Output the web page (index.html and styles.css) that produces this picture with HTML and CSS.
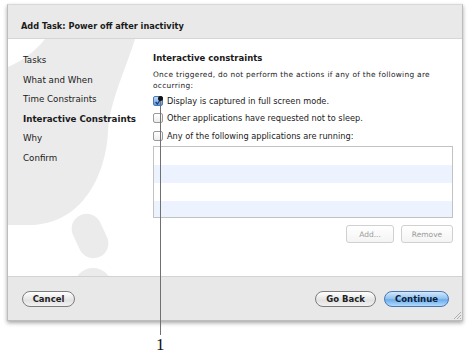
FILE: index.html
```html
<!DOCTYPE html>
<html lang="en">

<head>
    <meta charset="UTF-8">
    <title>Add Task</title>
    <link rel="stylesheet" href="styles.css">
</head>

<body>
    <div class="window">
        <div class="title-bar">Add Task: Power off after inactivity</div>

        <div class="content">
            <!-- faint artwork behind the sidebar -->
            <svg class="watermark" width="150" height="238" viewBox="8 38 150 238">
                <path d="M45 38 L135 38 C125 70 110 100 108 130 C106 175 82 222 32 224 L8 224 L8 66 C22 60 36 50 45 38 Z" fill="#ebebeb"/>
                <rect x="75" y="212" width="30" height="46" rx="15" fill="#ebebeb" transform="rotate(-25 90 235)"/>
                <circle cx="93" cy="286" r="19" fill="#ebebeb"/>
            </svg>

            <ul class="steps">
                <li>Tasks</li>
                <li>What and When</li>
                <li>Time Constraints</li>
                <li class="current">Interactive Constraints</li>
                <li>Why</li>
                <li>Confirm</li>
            </ul>

            <div class="pane">
                <h2>Interactive constraints</h2>
                <p class="note">Once triggered, do not perform the actions if any of the following are occurring:</p>

                <label class="check-row">
                    <span class="box checked">
                        <svg width="10" height="10" viewBox="0 0 10 10"><path d="M2 5 L4.2 7.5 L8.5 1.5" fill="none" stroke="#1c3f78" stroke-width="1.6"/></svg>
                    </span>
                    Display is captured in full screen mode.
                </label>
                <label class="check-row"><span class="box"></span>Other applications have requested not to sleep.</label>
                <label class="check-row"><span class="box"></span>Any of the following applications are running:</label>

                <div class="app-list">
                    <div class="row"></div>
                    <div class="row alt"></div>
                    <div class="row"></div>
                    <div class="row alt"></div>
                </div>

                <div class="list-buttons">
                    <button class="flat add" disabled>Add...</button>
                    <button class="flat remove" disabled>Remove</button>
                </div>
            </div>
        </div>

        <div class="bottom-bar">
            <button class="pill cancel">Cancel</button>
            <div class="nav-buttons">
                <button class="pill back">Go Back</button>
                <button class="pill primary">Continue</button>
            </div>
            <svg class="grip" width="8" height="8" viewBox="0 0 8 8">
                <path d="M8 1 L1 8 M8 4 L4 8 M8 7 L7 8" stroke="#b0b0b0" stroke-width="1"/>
            </svg>
        </div>
    </div>

    <!-- callout -->
    <div class="callout-line"></div>
    <div class="callout-dot"></div>
    <div class="callout-label">1</div>
</body>

</html>
```

FILE: styles.css
```css
body {
    margin: 0;
    padding: 0;
    background-color: #ffffff;
    font-family: "DejaVu Sans", sans-serif;
    color: #1a1a1a;
    position: relative;
    width: 470px;
    height: 362px;
    overflow: hidden;
}

.window {
    margin: 4px 0 0 7px;
    width: 454px;
    height: 315px;
    border: 1px solid #bdbdbd;
    border-top-color: #d8d8d8;
    display: flex;
    flex-direction: column;
    box-shadow: 0 2px 4px rgba(0, 0, 0, 0.35);
    background-color: #ffffff;
}

.title-bar {
    flex: none;
    background-color: #e9e9e9;
    border-bottom: 1px solid #d6d6d6;
    font-size: 8.2px;
    font-weight: bold;
    line-height: 12px;
    padding: 15px 0 0 13px;
    box-sizing: border-box;
    height: 34px;
}

.content {
    position: relative;
    height: 237px;
    flex: none;
    display: flex;
    overflow: hidden;
}

.watermark {
    position: absolute;
    left: 0;
    top: 0;
}

.steps {
    position: relative;
    list-style: none;
    margin: 0;
    padding: 12px 0 0 15px;
    width: 130px;
    flex: none;
}

.steps li {
    font-size: 8.7px;
    line-height: 19.5px;
    white-space: nowrap;
}

.steps li.current {
    font-weight: bold;
}

.pane {
    position: relative;
    width: 300px;
    padding-top: 13px;
}

.pane h2 {
    font-size: 8.5px;
    line-height: 12px;
    margin: 0;
}

.note {
    font-size: 7.4px;
    letter-spacing: 0.3px;
    line-height: 11px;
    margin: 5px 0 0;
}

.check-row {
    display: flex;
    align-items: center;
    height: 17.5px;
    font-size: 8.2px;
    white-space: nowrap;
}

.check-row:first-of-type {
    margin-top: 1px;
}

.box {
    width: 10px;
    height: 10px;
    box-sizing: border-box;
    border: 1px solid #9a9a9a;
    border-radius: 2px;
    background: linear-gradient(#ffffff, #ececec);
    margin-right: 4px;
    flex: none;
    display: flex;
}

.box.checked {
    border-color: #4a78b8;
    background: linear-gradient(#c5ddf7, #5b9ae0);
}

.app-list {
    margin-top: 1.5px;
    height: 72px;
    box-sizing: border-box;
    border: 1px solid #c2c2c2;
    overflow: hidden;
}

.row {
    height: 18px;
    background-color: #ffffff;
}

.row.alt {
    background-color: #edf3fe;
}

.list-buttons {
    display: flex;
    justify-content: flex-end;
    gap: 7px;
    margin-top: 7px;
}

.flat {
    height: 18px;
    border: 1px solid #d0d0d0;
    border-radius: 3px;
    background: linear-gradient(#ffffff, #f4f4f4);
    color: #9a9a9a;
    font-family: "DejaVu Sans", sans-serif;
    font-size: 7.5px;
    padding: 0;
}

.flat.add {
    width: 48px;
}

.flat.remove {
    width: 52px;
}

.bottom-bar {
    position: relative;
    flex: 1;
    background-color: #e8e8e8;
    border-top: 1px solid #d2d2d2;
    display: flex;
    align-items: center;
    justify-content: space-between;
    padding: 0 13px 0 14px;
}

.nav-buttons {
    display: flex;
    gap: 8px;
}

.pill {
    height: 16px;
    border: 1px solid #7d7d7d;
    border-radius: 8px;
    background: linear-gradient(#ffffff, #e2e2e2 60%, #f2f2f2);
    font-family: "DejaVu Sans", sans-serif;
    font-size: 8.5px;
    font-weight: bold;
    color: #222;
    padding: 0;
}

.pill.cancel {
    width: 53px;
}

.pill.back {
    width: 61px;
}

.pill.primary {
    width: 65px;
    border-color: #4b77b0;
    background: linear-gradient(#d4e8fb, #8cc0f0 50%, #6aacec 55%, #b4dafb);
    color: #0e1e3a;
}

.grip {
    position: absolute;
    right: 1px;
    bottom: 1px;
}

.callout-line {
    position: absolute;
    left: 160px;
    top: 98px;
    width: 1px;
    height: 237px;
    background-color: #707070;
}

.callout-dot {
    position: absolute;
    left: 158px;
    top: 96px;
    width: 5px;
    height: 5px;
    border-radius: 50%;
    background-color: #111;
}

.callout-label {
    position: absolute;
    left: 156px;
    top: 336px;
    font-family: "Liberation Serif", serif;
    font-size: 17px;
    line-height: 18px;
    color: #111;
}
```
